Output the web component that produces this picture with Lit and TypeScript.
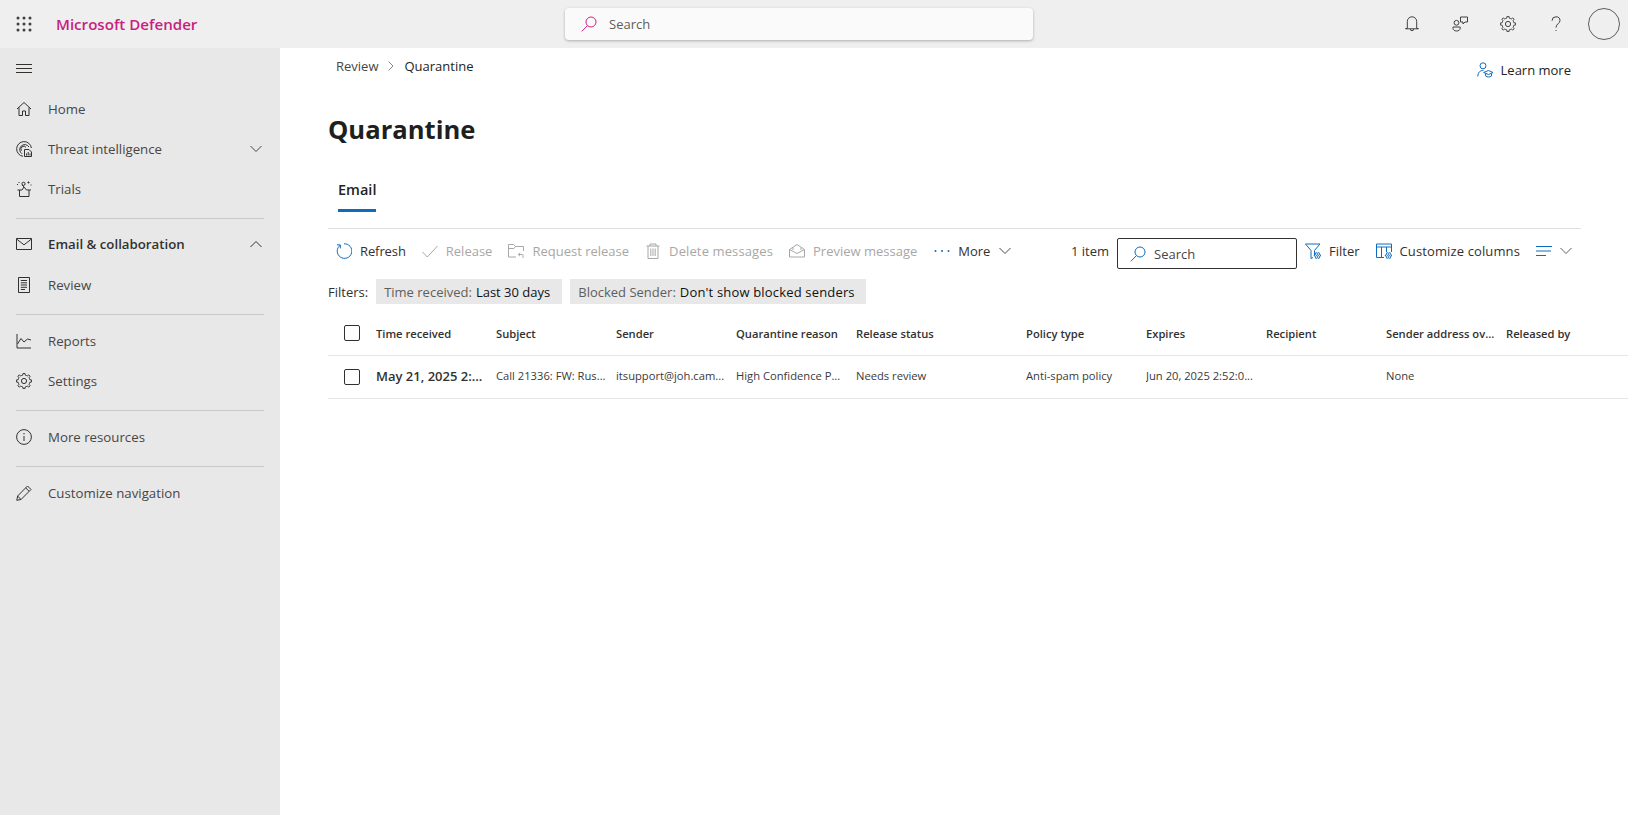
import { LitElement, html, css, svg } from "lit";
import { customElement } from "lit/decorators.js";

function gear(cx: number, cy: number, r1: number, r2: number, teeth: number) {
  let d = "";
  const step = (Math.PI * 2) / teeth;
  for (let i = 0; i < teeth; i++) {
    const a = i * step;
    const pts: [number, number][] = [
      [r1, a - step * 0.5],
      [r1, a - step * 0.27],
      [r2, a - step * 0.16],
      [r2, a + step * 0.16],
      [r1, a + step * 0.27],
    ];
    for (const [r, t] of pts) {
      d += `${d ? "L" : "M"}${(cx + r * Math.cos(t)).toFixed(2)} ${(cy + r * Math.sin(t)).toFixed(2)} `;
    }
  }
  return d + "Z";
}

const ic = (body: unknown, cls = "") =>
  html`<svg class="ic ${cls}" viewBox="0 0 16 16" fill="none" stroke="currentColor" stroke-width="1">${body}</svg>`;

const miniGear = (cx: number, cy: number) => svg`<path d=${gear(cx, cy, 2.3, 3.2, 6)} fill="#fff"/><circle cx=${cx} cy=${cy} r="0.9"/>`;

const I = {
  waffle: html`<svg class="ic" viewBox="0 0 16 16" fill="currentColor">${[2, 8, 14].flatMap((y) =>
    [2, 8, 14].map((x) => svg`<circle cx=${x} cy=${y} r="1.5"/>`))}</svg>`,
  burger: ic(svg`<path d="M0 .5H16M0 4.5H16M0 8.5H16"/>`),
  home: ic(svg`<path d="M1 8 8 1.5 15 8M3 6.5V14.5H6.5V10H9.5V14.5H13V6.5"/>`),
  threat: ic(svg`<path d="M7 15.3A7.4 7.4 0 1 1 15.4 7M6 12.8A5 5 0 1 1 13 6M5.5 9.6A2.6 2.6 0 1 1 10 6.4"/><path d="M8.5 8.5H13L15.5 11V15.5H8.5ZM10.5 14.5V12.5M12.2 14.5V11M14 14.5V12.5"/>`),
  trials: ic(svg`<path d="M3.5 9V15.5H13V9M1.5 9H6L8 6 10.5 9H15M8 6 6 4M1 3.5H2M3 1V2M14.5 4H15.5M12.5 .5V2.5M11.5 1.5H13.5"/><circle cx="7.5" cy="2.8" r="1.6"/>`),
  mail: ic(svg`<path d="M.5 2.5H15.5V13.5H.5ZM.5 3 8 8.8 15.5 3"/>`),
  review: ic(svg`<path d="M2.5 .5H13.5V15.5H2.5ZM4.8 3.5H11M4.8 5.8H11M4.8 8H11M4.8 10.3H11M4.8 12.5H9"/>`),
  reports: ic(svg`<path d="M1 1V15H15M1.5 11 5 5.5 8 9 11.5 6 15 7"/>`),
  gear: ic(svg`<path d=${gear(8, 8, 6, 7.7, 8)}/><circle cx="8" cy="8" r="2.6"/>`),
  info: ic(svg`<circle cx="8" cy="8" r="7.4"/><path d="M8 7V12"/><circle cx="8" cy="4.8" r=".7" fill="currentColor" stroke="none"/>`),
  pencil: ic(svg`<path d="M11.5 1 15 4.5 5 14.5 .8 15.3 1.6 11ZM9.8 3 13 6.2M1.6 11 5 14.5"/>`),
  bell: ic(svg`<path d="M8 .8A4.7 4.7 0 0 1 12.7 5.5V12.5H14.5M8 .8A4.7 4.7 0 0 0 3.3 5.5V12.5H1.5M1.5 12.8H14.5M6.3 13a1.7 1.7 0 0 0 3.4 0"/>`),
  people: ic(svg`<circle cx="4.5" cy="6.8" r="2.4"/><path d="M1 11H8.2V12.4C8.2 14 6.5 15 4.6 15S1 14 1 12.4ZM8.5 1H15.5V6H13L11 8V6H8.5Z"/>`),
  help: ic(svg`<path d="M4 4.8A4 4 0 0 1 8 .8 3.9 3.9 0 0 1 12 4.6C12 7.6 8 7.8 8 11.6"/><path d="M8 14V15"/>`),
  search: ic(svg`<circle cx="10" cy="6" r="5"/><path d="M6.4 9.6 .8 15.4"/>`),
  learn: ic(svg`<circle cx="6" cy="3.8" r="3"/><path d="M.8 14.5C.8 10.5 3 8.4 6.5 8.4M6.6 10.5 11.5 8.5 16 10.5 11.5 12.5ZM8.6 11.5V14C10 15.3 13 15.3 14.5 14V11.5"/>`),
  refresh: ic(svg`<path d="M4.2 2.2A7.3 7.3 0 1 0 8 .8M.9 1.8 4.3 2 4.4 5.4"/>`),
  check: ic(svg`<path d="M.5 9 5.3 14 15.5 3"/>`),
  request: ic(svg`<path d="M15.5 8V3.5H7.5L5.5 1.5H.5V14H8M.5 5.5H6L7.5 3.5M14.5 11.5H10.5M12 9.8 10.3 11.5 12 13.2M15 11.5V15"/>`),
  del: ic(svg`<path d="M1.5 3H14.5M5 3V1H11V3M3 3V15.5H13V3M5.8 5.5V13M8 5.5V13M10.2 5.5V13"/>`),
  preview: ic(svg`<path d="M.5 6.5 8 1.5 15.5 6.5V14H.5ZM.5 6.5 8 10.5 15.5 6.5M4 4.5V7M12 4.5V7" />`),
  dots: html`<svg class="ic" viewBox="0 0 16 16" fill="currentColor"><circle cx="1.5" cy="8" r="1"/><circle cx="8" cy="8" r="1"/><circle cx="14.5" cy="8" r="1"/></svg>`,
  filter: ic(svg`<path d="M.5 1H15L9.5 7.5V12M.5 1 6 7.5V15.5L8 14.5"/>${miniGear(12.5, 12.5)}`),
  columns: ic(svg`<path d="M.5 1H15.5V9M.5 1V14.5H8M.5 4H15.5M5.5 4V14.5M10.5 4V9"/>${miniGear(12.5, 12.5)}`),
  sort: ic(svg`<path d="M0 3.5H16M0 8H15M0 12.5H10"/>`),
};

const chevron = (up = false) =>
  html`<svg class="chev" viewBox="0 0 12 8" fill="none" stroke="currentColor" stroke-width="1"><path d=${up ? "M.5 7 6 1.5 11.5 7" : "M.5 1 6 6.5 11.5 1"}/></svg>`;

@customElement("app-root")
export class AppRoot extends LitElement {
  static styles = css`
    :host {
      display: block;
      height: 100vh;
      overflow: hidden;
      font-family: "Open Sans", "Noto Sans", sans-serif;
      font-size: 13px;
      color: #323130;
      background: #fff;
    }
    .ic { width: 16px; height: 16px; flex: none; display: block; }
    .chev { width: 12px; height: 8px; flex: none; display: block; }

    .top {
      height: 48px;
      background: #efefef;
      display: grid;
      grid-template-columns: 565px 468px 1fr;
      align-items: center;
    }
    .brand { display: flex; align-items: center; gap: 24px; padding-left: 16px; }
    .brand .ic { color: #404040; }
    .brand span { color: #c71f80; font-size: 15.1px; font-weight: 600; }
    .gsearch {
      height: 32px;
      background: #fafafa;
      border-radius: 4px;
      box-shadow: 0 1px 3px rgba(0, 0, 0, 0.28);
      display: flex;
      align-items: center;
      gap: 12px;
      padding-left: 16px;
      color: #605e5c;
    }
    .gsearch .ic { color: #d0218a; }
    .tools { display: flex; align-items: center; justify-content: flex-end; padding-right: 8px; gap: 32px; color: #404040; }
    .avatar { width: 32px; height: 32px; border: 1px solid #605e5c; border-radius: 50%; box-sizing: border-box; margin-left: -8px; }

    .body { display: grid; grid-template-columns: 280px 1fr; height: calc(100vh - 48px); }
    nav { background: #e8e8e8; padding-top: 16px; font-size: 13.25px; }
    .burger { padding-left: 16px; height: 25px; color: #323130; }
    .nrow { height: 40px; display: flex; align-items: center; padding: 0 18px 0 16px; gap: 16px; color: #484644; }
    .nrow span { flex: 1; }
    .nrow .ic { color: #323130; }
    .nrow.act { color: #323130; font-weight: 600; margin-bottom: 1px; }
    hr { border: 0; border-top: 1px solid #c8c8c8; margin: 0 16px; }
    .h1 { margin-top: 9px; margin-bottom: 5px; }
    .h2 { margin-top: 9px; margin-bottom: 6px; }

    main { padding: 0 47px 0 48px; min-width: 0; overflow: hidden; }
    .crumbs { height: 40px; display: flex; justify-content: space-between; }
    .bc { display: flex; align-items: center; gap: 10px; height: 20px; margin: 8px 0 0 8px; color: #242424; }
    .bc span:first-child { color: #484644; }
    .bc svg { width: 6px; height: 10px; color: #8a8886; }
    .learn { display: flex; align-items: center; gap: 8px; height: 20px; margin: 12px 10px 0 0; color: #242424; }
    .learn .ic { color: #0f6cbd; }
    h1 { margin: 22px 0 0; height: 40px; line-height: 40px; font-size: 25.6px; font-weight: 700; color: #201f1e; }
    .tabs { margin-top: 20px; padding-bottom: 16px; border-bottom: 1px solid #e1dfdd; }
    .tab { display: inline-block; margin-left: 10px; height: 39px; line-height: 40px; font-weight: 600; font-size: 14.5px; color: #242424; border-bottom: 3px solid #0f6cbd; }

    .bar { height: 44px; display: flex; align-items: center; padding: 0 9px 0 8px; gap: 16px; }
    .btn { display: flex; align-items: center; gap: 8px; white-space: nowrap; color: #323130; }
    .btn .ic { color: #0f6cbd; }
    .btn.off, .btn.off .ic { color: #a9a7a5; }
    .btn.tight span { letter-spacing: -0.1px; }
    .btn.wide span { letter-spacing: 0.12px; }
    .btn.shift { margin-left: 1px; }
    .btn .chev { margin-left: 1px; color: #484644; }
    .right { margin-left: auto; display: flex; align-items: center; gap: 8px; }
    .count { white-space: nowrap; }
    .box {
      width: 180px;
      height: 31px;
      box-sizing: border-box;
      border: 1px solid #323130;
      border-radius: 2px;
      display: flex;
      align-items: center;
      gap: 8px;
      margin-top: 5px;
      padding-left: 12px;
      color: #484644;
    }
    .box .ic { color: #0f6cbd; }
    .right .g { display: flex; align-items: center; gap: 16px; }
    .sorter { gap: 7px; }
    .sorter .chev { color: #605e5c; }

    .filters { display: flex; align-items: center; gap: 8px; margin-top: 6px; height: 25px; }
    .chip { background: #e8e8e8; height: 25px; padding: 0 12px 0 8px; display: flex; align-items: center; gap: 4px; color: #605e5c; white-space: nowrap; }
    .chip b { font-weight: 400; color: #111; }
    .chip.long { padding-right: 11px; }
    .chip.long b { letter-spacing: 0.17px; }

    .tbl { margin: 9px -47px 0 0; }
    .tr {
      display: grid;
      grid-template-columns: 48px 120px 120px 120px 120px 170px 120px 120px 120px 120px 1fr;
      align-items: center;
      height: 42px;
      border-bottom: 1px solid #e6e6e6;
      font-size: 11.2px;
      white-space: nowrap;
      color: #3b3a39;
    }
    .tr div { overflow: hidden; }
    .tr.head { font-weight: 600; color: #323130; padding-bottom: 2px; height: 40px; }
    .tr .c { padding-bottom: 4px; }
    .tr .t { font-size: 13px; font-weight: 600; color: #323130; padding-bottom: 2px; }
    .cb {
      display: block;
      width: 16px;
      height: 16px;
      margin-left: 16px;
      box-sizing: border-box;
      border: 1px solid #323130;
      border-radius: 2px;
      background: #fff;
    }
  `;

  render() {
    const heads = ["Time received", "Subject", "Sender", "Quarantine reason", "Release status", "Policy type", "Expires", "Recipient", "Sender address ov...", "Released by"];
    const cells = ["Call 21336: FW: Rus...", "itsupport@joh.cam...", "High Confidence P...", "Needs review", "Anti-spam policy", "Jun 20, 2025 2:52:0...", "", "None", ""];
    const nrow = (icon: unknown, label: string, tail: unknown = null, act = false) =>
      html`<div class="nrow ${act ? "act" : ""}">${icon}<span>${label}</span>${tail}</div>`;
    return html`
      <header class="top">
        <div class="brand">${I.waffle}<span>Microsoft Defender</span></div>
        <div class="gsearch">${I.search}<span>Search</span></div>
        <div class="tools">${I.bell}${I.people}${I.gear}${I.help}<div class="avatar"></div></div>
      </header>
      <div class="body">
        <nav>
          <div class="burger">${I.burger}</div>
          ${nrow(I.home, "Home")}
          ${nrow(I.threat, "Threat intelligence", chevron())}
          ${nrow(I.trials, "Trials")}
          <hr class="h1" />
          ${nrow(I.mail, "Email & collaboration", chevron(true), true)}
          ${nrow(I.review, "Review")}
          <hr class="h2" />
          ${nrow(I.reports, "Reports")}
          ${nrow(I.gear, "Settings")}
          <hr class="h2" />
          ${nrow(I.info, "More resources")}
          <hr class="h2" />
          ${nrow(I.pencil, "Customize navigation")}
        </nav>
        <main>
          <div class="crumbs">
            <div class="bc">
              <span>Review</span>
              <svg viewBox="0 0 6 10" fill="none" stroke="currentColor"><path d="M.5 .5 5 5 .5 9.5" /></svg>
              <span>Quarantine</span>
            </div>
            <div class="learn">${I.learn}<span>Learn more</span></div>
          </div>
          <h1>Quarantine</h1>
          <div class="tabs"><span class="tab">Email</span></div>
          <div class="bar">
            <div class="btn tight">${I.refresh}<span>Refresh</span></div>
            <div class="btn off">${I.check}<span>Release</span></div>
            <div class="btn off">${I.request}<span>Request release</span></div>
            <div class="btn off wide">${I.del}<span>Delete messages</span></div>
            <div class="btn off">${I.preview}<span>Preview message</span></div>
            <div class="btn shift">${I.dots}<span>More</span>${chevron()}</div>
            <div class="right">
              <span class="count">1 item</span>
              <div class="box">${I.search}<span>Search</span></div>
              <div class="g">
                <div class="btn">${I.filter}<span>Filter</span></div>
                <div class="btn wide">${I.columns}<span>Customize columns</span></div>
                <div class="btn sorter">${I.sort}${chevron()}</div>
              </div>
            </div>
          </div>
          <div class="filters">
            <span>Filters:</span>
            <div class="chip"><span>Time received:</span><b>Last 30 days</b></div>
            <div class="chip long"><span>Blocked Sender:</span><b>Don't show blocked senders</b></div>
          </div>
          <div class="tbl">
            <div class="tr head">
              <div><span class="cb"></span></div>
              ${heads.map((h) => html`<div>${h}</div>`)}
            </div>
            <div class="tr">
              <div><span class="cb"></span></div>
              <div class="t">May 21, 2025 2:...</div>
              ${cells.map((c) => html`<div class="c">${c}</div>`)}
            </div>
          </div>
        </main>
      </div>
    `;
  }
}
